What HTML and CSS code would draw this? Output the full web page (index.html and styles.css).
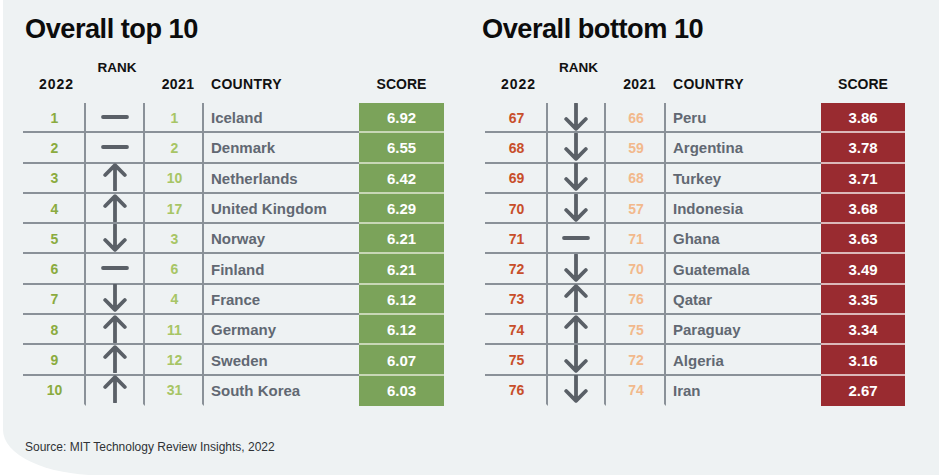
FILE: index.html
```html
<!DOCTYPE html>
<html lang="en">
<head>
<meta charset="utf-8">
<title>Overall top and bottom 10</title>
<link rel="stylesheet" href="styles.css">
</head>
<body>
<svg width="0" height="0" class="defs">
  <defs>
    <symbol id="up" viewBox="0 0 24 28"><path d="M12 27V2.2M2.2 12L12 2.2L21.8 12" fill="none" stroke="currentColor" stroke-width="3.8" stroke-linecap="round" stroke-linejoin="round"/></symbol>
    <symbol id="down" viewBox="0 0 24 28"><path d="M12 1V25.8M2.2 16L12 25.8L21.8 16" fill="none" stroke="currentColor" stroke-width="3.8" stroke-linecap="round" stroke-linejoin="round"/></symbol>
    <symbol id="same" viewBox="0 0 28 6"><path d="M2 3H26" fill="none" stroke="currentColor" stroke-width="3.8" stroke-linecap="round"/></symbol>
  </defs>
</svg>
<div class="panel">
  <div class="tables">
    <section class="block top">
      <h2 class="title">Overall top 10</h2>
      <div class="head">
        <div class="h-rank">RANK</div>
        <div class="h-y22">2022</div>
        <div class="h-y21">2021</div>
        <div class="h-country">COUNTRY</div>
        <div class="h-score">SCORE</div>
      </div>
      <div class="grid">
        <div class="c r22">1</div><div class="c ar"><svg class="i-same"><use href="#same"/></svg></div><div class="c r21">1</div><div class="c ctry">Iceland</div><div class="c sc">6.92</div>
        <div class="c r22">2</div><div class="c ar"><svg class="i-same"><use href="#same"/></svg></div><div class="c r21">2</div><div class="c ctry">Denmark</div><div class="c sc">6.55</div>
        <div class="c r22">3</div><div class="c ar"><svg class="i-arrow"><use href="#up"/></svg></div><div class="c r21">10</div><div class="c ctry">Netherlands</div><div class="c sc">6.42</div>
        <div class="c r22">4</div><div class="c ar"><svg class="i-arrow"><use href="#up"/></svg></div><div class="c r21">17</div><div class="c ctry">United Kingdom</div><div class="c sc">6.29</div>
        <div class="c r22">5</div><div class="c ar"><svg class="i-arrow"><use href="#down"/></svg></div><div class="c r21">3</div><div class="c ctry">Norway</div><div class="c sc">6.21</div>
        <div class="c r22">6</div><div class="c ar"><svg class="i-same"><use href="#same"/></svg></div><div class="c r21">6</div><div class="c ctry">Finland</div><div class="c sc">6.21</div>
        <div class="c r22">7</div><div class="c ar"><svg class="i-arrow"><use href="#down"/></svg></div><div class="c r21">4</div><div class="c ctry">France</div><div class="c sc">6.12</div>
        <div class="c r22">8</div><div class="c ar"><svg class="i-arrow"><use href="#up"/></svg></div><div class="c r21">11</div><div class="c ctry">Germany</div><div class="c sc">6.12</div>
        <div class="c r22">9</div><div class="c ar"><svg class="i-arrow"><use href="#up"/></svg></div><div class="c r21">12</div><div class="c ctry">Sweden</div><div class="c sc">6.07</div>
        <div class="c r22 last">10</div><div class="c ar last"><svg class="i-arrow"><use href="#up"/></svg></div><div class="c r21 last">31</div><div class="c ctry last">South Korea</div><div class="c sc last">6.03</div>
      </div>
    </section>
    <section class="block bottom">
      <h2 class="title">Overall bottom 10</h2>
      <div class="head">
        <div class="h-rank">RANK</div>
        <div class="h-y22">2022</div>
        <div class="h-y21">2021</div>
        <div class="h-country">COUNTRY</div>
        <div class="h-score">SCORE</div>
      </div>
      <div class="grid">
        <div class="c r22">67</div><div class="c ar"><svg class="i-arrow"><use href="#down"/></svg></div><div class="c r21">66</div><div class="c ctry">Peru</div><div class="c sc">3.86</div>
        <div class="c r22">68</div><div class="c ar"><svg class="i-arrow"><use href="#down"/></svg></div><div class="c r21">59</div><div class="c ctry">Argentina</div><div class="c sc">3.78</div>
        <div class="c r22">69</div><div class="c ar"><svg class="i-arrow"><use href="#down"/></svg></div><div class="c r21">68</div><div class="c ctry">Turkey</div><div class="c sc">3.71</div>
        <div class="c r22">70</div><div class="c ar"><svg class="i-arrow"><use href="#down"/></svg></div><div class="c r21">57</div><div class="c ctry">Indonesia</div><div class="c sc">3.68</div>
        <div class="c r22">71</div><div class="c ar"><svg class="i-same"><use href="#same"/></svg></div><div class="c r21">71</div><div class="c ctry">Ghana</div><div class="c sc">3.63</div>
        <div class="c r22">72</div><div class="c ar"><svg class="i-arrow"><use href="#down"/></svg></div><div class="c r21">70</div><div class="c ctry">Guatemala</div><div class="c sc">3.49</div>
        <div class="c r22">73</div><div class="c ar"><svg class="i-arrow"><use href="#up"/></svg></div><div class="c r21">76</div><div class="c ctry">Qatar</div><div class="c sc">3.35</div>
        <div class="c r22">74</div><div class="c ar"><svg class="i-arrow"><use href="#up"/></svg></div><div class="c r21">75</div><div class="c ctry">Paraguay</div><div class="c sc">3.34</div>
        <div class="c r22">75</div><div class="c ar"><svg class="i-arrow"><use href="#down"/></svg></div><div class="c r21">72</div><div class="c ctry">Algeria</div><div class="c sc">3.16</div>
        <div class="c r22 last">76</div><div class="c ar last"><svg class="i-arrow"><use href="#down"/></svg></div><div class="c r21 last">74</div><div class="c ctry last">Iran</div><div class="c sc last">2.67</div>
      </div>
    </section>
  </div>
  <p class="source">Source: MIT Technology Review Insights, 2022</p>
</div>
</body>
</html>
```
FILE: styles.css
```css
html, body {
  margin: 0;
  padding: 0;
  background: #ffffff;
}
body {
  font-family: "Liberation Sans", Arial, sans-serif;
  width: 939px;
  height: 475px;
  overflow: hidden;
}
.defs {
  position: absolute;
  width: 0;
  height: 0;
}
.panel {
  margin-left: 3px;
  height: 475px;
  box-sizing: border-box;
  background: #eef2f3;
  border-bottom-left-radius: 95px 45px;
  padding: 14px 0 0 20px;
}
.tables {
  display: flex;
  gap: 41px;
}
.block {
  width: 421px;
}
.title {
  margin: 0 0 0 2px;
  font-size: 27.2px;
  line-height: 30px;
  font-weight: 700;
  letter-spacing: -0.5px;
  color: #0c0c0c;
}
.bottom .title { margin-left: -3px; }
.head {
  display: grid;
  grid-template-columns: 63px 59px 59px 155px 85px;
  grid-template-rows: 17px 18px;
  margin-top: 15px;
  margin-bottom: 9px;
  font-size: 14px;
  font-weight: 700;
  line-height: 17px;
  color: #111;
}
.h-rank { grid-column: 2; grid-row: 1; text-align: center; padding-left: 3px; font-size: 13.5px; }
.h-y22 { grid-column: 1; grid-row: 2; text-align: center; padding-left: 4px; letter-spacing: 1px; }
.h-y21 { grid-column: 3; grid-row: 2; text-align: center; padding-left: 7px; letter-spacing: 0.4px; }
.h-country { grid-column: 4; grid-row: 2; padding-left: 7px; letter-spacing: 0.3px; }
.h-score { grid-column: 5; grid-row: 2; text-align: center; }

.grid {
  display: grid;
  grid-template-columns: 63px 59px 59px 155px 85px;
  grid-auto-rows: 30.3px;
}
.c {
  box-sizing: border-box;
  display: flex;
  align-items: center;
  border-bottom: 2px solid #8a9198;
  font-weight: 700;
}
.c.last { border-bottom-color: transparent; }
.r22, .r21 {
  justify-content: center;
  font-size: 14px;
  border-right: 2px solid #8a9198;
  padding-top: 1px;
}
.r22 { padding-left: 2px; }
.r21 { padding-left: 2px; }
.ar {
  justify-content: center;
  border-right: 2px solid #8a9198;
  color: #5a6067;
  padding-top: 1px;
}
.i-arrow { width: 24px; height: 28px; margin-top: -2px; }
.i-same { width: 28px; height: 6px; margin-top: -2px; }
.ctry {
  padding-left: 7px;
  font-size: 15px;
  color: #616872;
  padding-top: 1px;
}
.sc {
  justify-content: center;
  color: #ffffff;
  font-size: 15px;
  padding-top: 1px;
}
.top .r22 { color: #8aab3e; }
.top .r21 { color: #a7c565; }
.top .sc { background: #7ba35a; border-bottom-color: #c8d7b6; }
.bottom .r22 { color: #c84e2a; }
.bottom .r21 { color: #f2b98c; }
.bottom .sc { background: #992b30; border-bottom-color: #dcb8b9; }
.top .sc.last, .bottom .sc.last { border-bottom-color: transparent; }
.bottom .grid, .bottom .head { grid-template-columns: 63px 58px 60px 155px 84px; }

.source {
  margin: 34px 0 0 2px;
  font-size: 12px;
  line-height: 14px;
  letter-spacing: 0;
  color: #2f3236;
}
```
